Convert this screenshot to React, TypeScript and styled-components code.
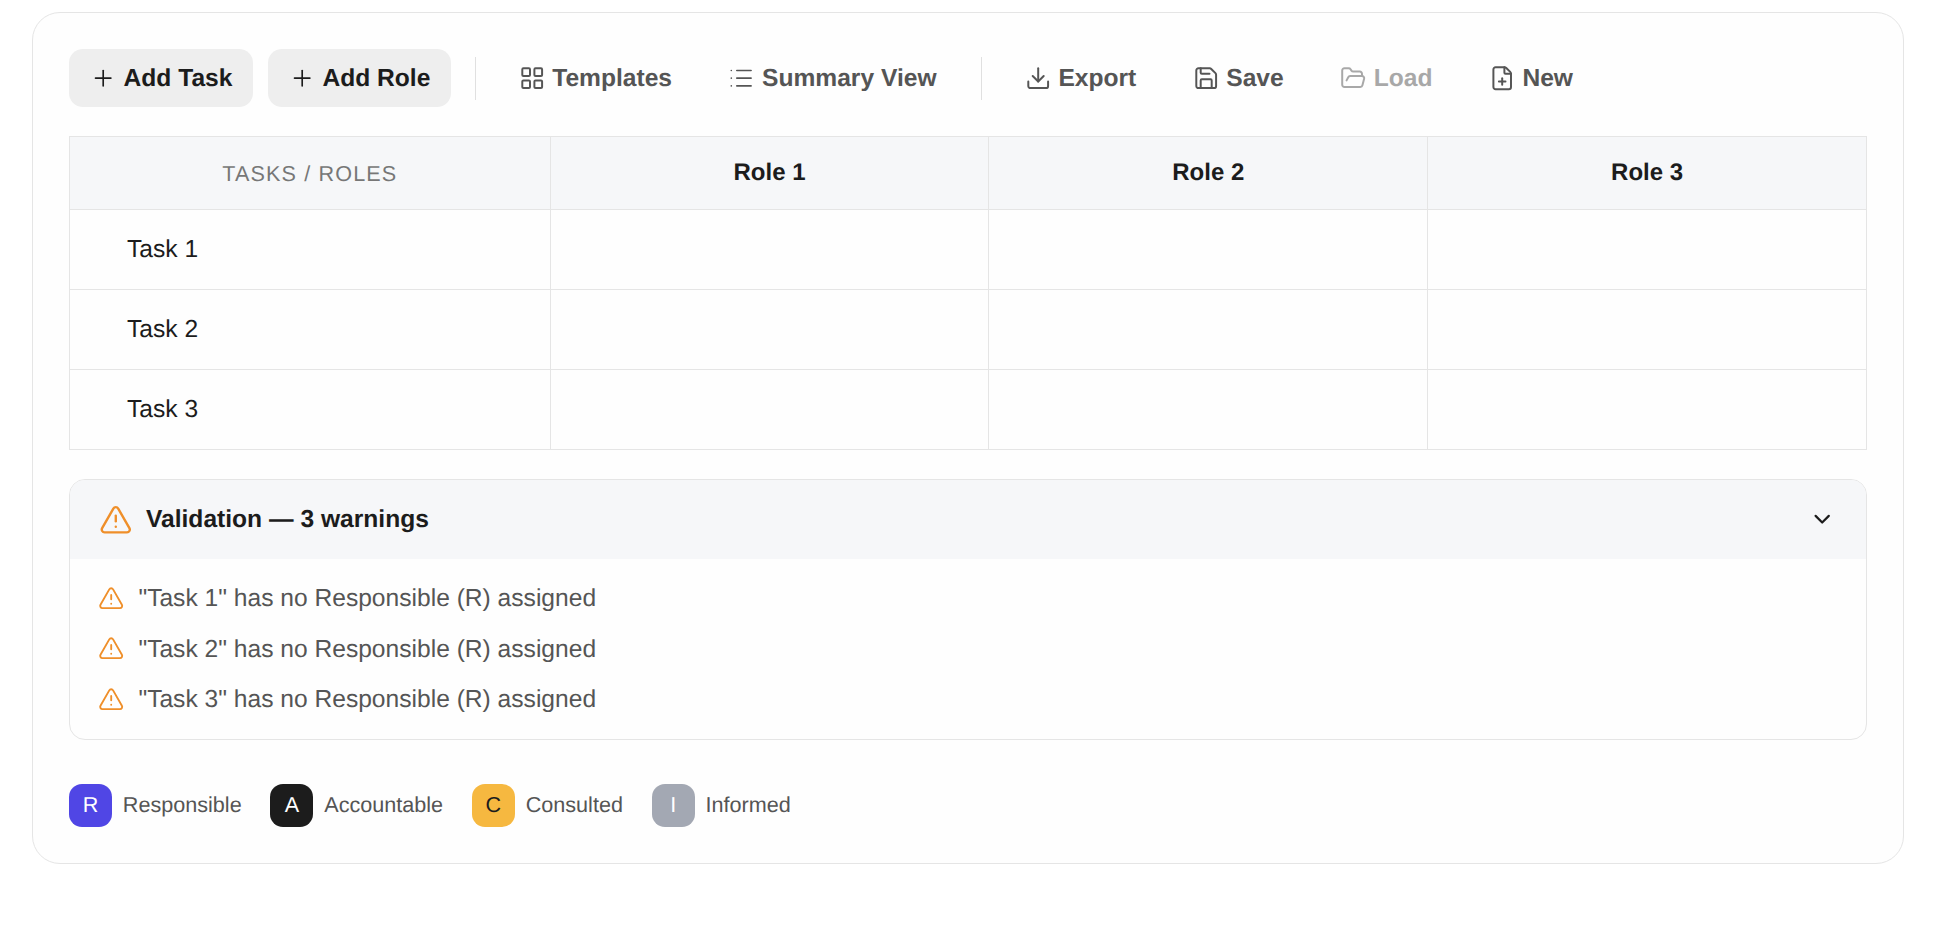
import React from "react";
import styled, { createGlobalStyle } from "styled-components";
import { ChevronDown, Download, FilePlus, FolderOpen, LayoutGrid, List, Plus, Save, TriangleAlert } from "lucide-react";

const Global = createGlobalStyle`
  html, body { margin: 0; background: #fff; }
  body {
    font-family: "Liberation Sans", Arial, sans-serif;
    color: #1c1c1c;
    text-rendering: geometricPrecision;
  }
  * { box-sizing: border-box; }
`;

const Page = styled.div`
  padding: 12px 32px;
`;

const Card = styled.div`
  height: 852px;
  border: 1px solid #e5e5e5;
  border-radius: 28px;
  background: #fefefe;
  padding: 36px;
  display: flex;
  flex-direction: column;
`;

const Toolbar = styled.div`
  display: flex;
  align-items: center;
  gap: 14.4px;
  height: 58px;
  margin-bottom: 29px;
`;

const Button = styled.button<{ $primary?: boolean; $disabled?: boolean }>`
  display: inline-flex;
  align-items: center;
  gap: 7.2px;
  height: 58px;
  padding: 1px 21px 0;
  border: 0;
  border-radius: 14px;
  font: bold 24.6px "Liberation Sans", Arial, sans-serif;
  text-rendering: geometricPrecision;
  color: ${(p) => (p.$primary ? "#1c1c1c" : "#555555")};
  background: ${(p) => (p.$primary ? "#eeeeee" : "transparent")};
  opacity: ${(p) => (p.$disabled ? 0.5 : 1)};
  svg { flex: none; margin-top: -1px; }
`;

const Divider = styled.div`
  width: 1.5px;
  height: 43px;
  margin: 0 7px 0 9px;
  background: #e0e0e0;
`;

const Grid = styled.div`
  display: grid;
  grid-template-columns: 480.6px 1fr 1fr 1fr;
  grid-template-rows: 73px 80px 80px 80px;
  border-top: 1px solid #e5e5e5;
  border-left: 1px solid #e5e5e5;
  margin-bottom: 29px;
`;

const Cell = styled.div`
  border-right: 1px solid #e5e5e5;
  border-bottom: 1px solid #e5e5e5;
`;

const HeaderCell = styled(Cell)`
  display: flex;
  align-items: center;
  justify-content: center;
  background: #f6f7f9;
  font-weight: bold;
  font-size: 24px;
  color: #1c1c1c;
`;

const CornerCell = styled(HeaderCell)`
  font-weight: normal;
  font-size: 21.6px;
  letter-spacing: 1.14px;
  color: #777777;
  padding-top: 2px;
`;

const TaskCell = styled(Cell)`
  display: flex;
  align-items: center;
  padding-left: 57px;
  font-size: 24.6px;
  color: #1c1c1c;
`;

const Validation = styled.div`
  height: 261px;
  border: 1px solid #e5e5e5;
  border-radius: 16px;
  overflow: hidden;
  margin-bottom: 45px;
`;

const ValidationHeader = styled.div`
  display: flex;
  align-items: center;
  height: 79px;
  padding: 1px 31px 0 29px;
  background: #f6f7f9;
  font-weight: bold;
  font-size: 24.6px;
  color: #1c1c1c;
  gap: 13.4px;
  svg { margin-top: -1px; }
  svg:last-child { margin-left: auto; }
`;

const WarningList = styled.ul`
  list-style: none;
  margin: 0;
  padding: 15px 0 0 28px;
`;

const WarningRow = styled.li`
  display: flex;
  align-items: center;
  gap: 14px;
  height: 50.5px;
  font-size: 24.6px;
  color: #555555;
  svg { margin-top: -3px; }
`;

const Legend = styled.div`
  display: flex;
  align-items: center;
  gap: 28.8px;
  margin-top: -1px;
`;

const LegendItem = styled.div`
  display: flex;
  align-items: center;
  gap: 10.8px;
  font-size: 21.6px;
  color: #555555;
`;

const LegendLabel = styled.span`
  padding-bottom: 2px;
`;

const Badge = styled.span<{ $bg: string; $fg: string }>`
  display: flex;
  align-items: center;
  justify-content: center;
  width: 43px;
  height: 43px;
  padding-bottom: 2px;
  border-radius: 13px;
  background: ${(p) => p.$bg};
  color: ${(p) => p.$fg};
`;

const orange = "#ef8f2a";
const tasks = ["Task 1", "Task 2", "Task 3"];
const roles = ["Role 1", "Role 2", "Role 3"];
const legend = [
  { k: "R", label: "Responsible", bg: "#5046e5", fg: "#fff" },
  { k: "A", label: "Accountable", bg: "#1c1c1c", fg: "#fff" },
  { k: "C", label: "Consulted", bg: "#f6b840", fg: "#1c1c1c" },
  { k: "I", label: "Informed", bg: "#a3a8b3", fg: "#fff" },
];

export default function App() {
  return (
    <Page>
      <Global />
      <Card>
        <Toolbar>
          <Button $primary><Plus size={26.4} strokeWidth={1.5} />Add Task</Button>
          <Button $primary><Plus size={26.4} strokeWidth={1.5} />Add Role</Button>
          <Divider />
          <Button><LayoutGrid size={26.4} strokeWidth={1.8} />Templates</Button>
          <Button><List size={26.4} strokeWidth={1.5} />Summary View</Button>
          <Divider />
          <Button><Download size={26.4} strokeWidth={1.8} />Export</Button>
          <Button><Save size={26.4} strokeWidth={1.8} />Save</Button>
          <Button $disabled><FolderOpen size={26.4} strokeWidth={1.8} />Load</Button>
          <Button><FilePlus size={26.4} strokeWidth={1.8} />New</Button>
        </Toolbar>
        <Grid>
          <CornerCell>TASKS / ROLES</CornerCell>
          {roles.map((r) => <HeaderCell key={r}>{r}</HeaderCell>)}
          {tasks.map((t) => (
            <React.Fragment key={t}>
              <TaskCell>{t}</TaskCell>
              {roles.map((r) => <Cell key={r} />)}
            </React.Fragment>
          ))}
        </Grid>
        <Validation>
          <ValidationHeader>
            <TriangleAlert size={33.6} strokeWidth={1.7} color={orange} />
            <span>Validation — 3 warnings</span>
            <ChevronDown size={26.4} strokeWidth={2} color="#1c1c1c" />
          </ValidationHeader>
          <WarningList>
            {tasks.map((t) => (
              <WarningRow key={t}>
                <TriangleAlert size={26.4} strokeWidth={1.7} color={orange} />
                "{t}" has no Responsible (R) assigned
              </WarningRow>
            ))}
          </WarningList>
        </Validation>
        <Legend>
          {legend.map((l) => (
            <LegendItem key={l.k}>
              <Badge $bg={l.bg} $fg={l.fg}>{l.k}</Badge>
              <LegendLabel>{l.label}</LegendLabel>
            </LegendItem>
          ))}
        </Legend>
      </Card>
    </Page>
  );
}
